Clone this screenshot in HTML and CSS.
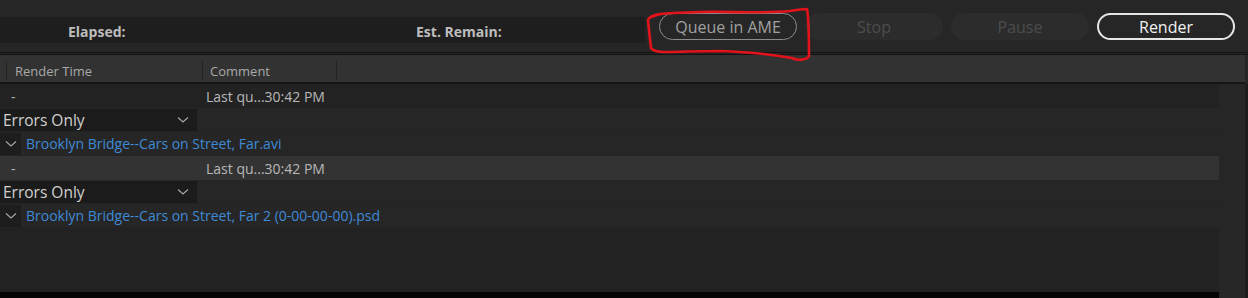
FILE: index.html
```html
<!DOCTYPE html>
<html>
<head>
<meta charset="utf-8">
<link rel="stylesheet" href="styles.css">
</head>
<body>
<div class="panel">
  <div class="top">
    <div class="status">
      <span class="label label-elapsed">Elapsed:</span>
      <span class="label">Est. Remain:</span>
    </div>
    <div class="buttons">
      <button class="btn btn-queue">Queue in AME</button>
      <button class="btn btn-off">Stop</button>
      <button class="btn btn-off">Pause</button>
      <button class="btn btn-render">Render</button>
    </div>
    <svg class="scribble" width="180" height="70" viewBox="0 0 180 70">
      <path d="M12 17 C20 12 40 13 60 12 C90 11 120 14 150 11 C158 10 162 9 167 9 C169 20 169 35 169 56 C167 60 158 61 152 58 C130 54 110 52 80 51 C60 51 40 52 25 52 C18 52 13 51 11 48 C10 40 9 30 8 20 C9 17 12 15 20 14" fill="none" stroke="#e3131b" stroke-width="2.6" stroke-linecap="round" stroke-linejoin="round"/>
    </svg>
  </div>
  <div class="rule"></div>
  <div class="header">
    <div class="hcol hcol-first"></div>
    <div class="hcol hcol-time">Render Time</div>
    <div class="hcol hcol-comment">Comment</div>
  </div>
  <div class="body">
    <div class="list">
      <div class="row row-dark">
        <span class="cell-time">-</span>
        <span class="cell-comment">Last qu...30:42 PM</span>
      </div>
      <div class="row">
        <div class="dropdown">
          <span>Errors Only</span>
          <svg class="chev" width="12" height="8" viewBox="0 0 12 8"><path d="M1 1.5 L6 6 L11 1.5" fill="none" stroke="#a8a8a8" stroke-width="1.1"/></svg>
        </div>
      </div>
      <div class="row">
        <div class="twirl"><svg width="12" height="8" viewBox="0 0 12 8"><path d="M1 1.5 L6 6 L11 1.5" fill="none" stroke="#a8a8a8" stroke-width="1.1"/></svg></div>
        <span class="link">Brooklyn Bridge--Cars on Street, Far.avi</span>
      </div>
      <div class="row row-hi">
        <span class="cell-time">-</span>
        <span class="cell-comment">Last qu...30:42 PM</span>
      </div>
      <div class="row">
        <div class="dropdown">
          <span>Errors Only</span>
          <svg class="chev" width="12" height="8" viewBox="0 0 12 8"><path d="M1 1.5 L6 6 L11 1.5" fill="none" stroke="#a8a8a8" stroke-width="1.1"/></svg>
        </div>
      </div>
      <div class="row">
        <div class="twirl"><svg width="12" height="8" viewBox="0 0 12 8"><path d="M1 1.5 L6 6 L11 1.5" fill="none" stroke="#a8a8a8" stroke-width="1.1"/></svg></div>
        <span class="link">Brooklyn Bridge--Cars on Street, Far 2 (0-00-00-00).psd</span>
      </div>
      <div class="empty"></div>
      <div class="bottom"></div>
    </div>
    <div class="scrollbar"></div>
    <div class="edge"></div>
  </div>
</div>
</body>
</html>
```

FILE: styles.css
```css
html, body {
  margin: 0;
  padding: 0;
  background: #262626;
}
body {
  width: 1248px;
  height: 298px;
  overflow: hidden;
  font-family: "Open Sans", "Noto Sans", sans-serif;
}
.panel {
  display: flex;
  flex-direction: column;
  height: 298px;
}
.top {
  position: relative;
  height: 52px;
  display: flex;
  align-items: flex-start;
  flex-shrink: 0;
}
.status {
  margin-top: 17px;
  width: 645px;
  height: 26px;
  background: #1e1e1e;
  display: flex;
  align-items: center;
  padding-left: 68px;
  padding-top: 2px;
  box-sizing: border-box;
}
.label {
  font-size: 14px;
  font-weight: 700;
  color: #bdbdbd;
}
.label-elapsed {
  width: 348px;
}
.buttons {
  margin-top: 13px;
  margin-left: 14px;
  display: flex;
  gap: 8px;
}
.btn {
  width: 138px;
  height: 27px;
  border-radius: 14px;
  font-family: "Open Sans", "Noto Sans", sans-serif;
  font-size: 16px;
  line-height: 20px;
  padding: 0;
  box-sizing: border-box;
  background: transparent;
}
.btn-queue {
  border: 1.5px solid #8c8c8c;
  color: #a0a0a0;
}
.btn-off {
  border: none;
  background: #2c2c2c;
  color: #4c4c4c;
}
.btn-render {
  border: 2px solid #e6e6e6;
  color: #f2f2f2;
}
.scribble {
  position: absolute;
  left: 640px;
  top: 0;
}
.rule {
  height: 1px;
  border-top: 1px solid #121212;
  border-bottom: 1px solid #121212;
  flex-shrink: 0;
}
.header {
  height: 29px;
  width: 1245px;
  background: #323232;
  border-bottom: 2px solid #161616;
  display: flex;
  align-items: center;
  flex-shrink: 0;
  font-size: 13px;
  color: #a9a9a9;
  padding-top: 4px;
  box-sizing: border-box;
}
.hcol {
  height: 19px;
  display: flex;
  align-items: center;
  border-right: 1px solid #222;
  box-sizing: border-box;
}
.hcol-first {
  width: 7px;
}
.hcol-time {
  width: 196px;
  padding-left: 8px;
}
.hcol-comment {
  width: 134px;
  padding-left: 7px;
}
.body {
  flex: 1;
  display: flex;
  min-height: 0;
}
.list {
  width: 1219px;
  display: flex;
  flex-direction: column;
  background: #222;
}
.row {
  height: 24px;
  display: flex;
  align-items: center;
  background: #262626;
  box-sizing: border-box;
  border-bottom: 1px solid #232323;
  flex-shrink: 0;
}
.row-dark {
  background: #222;
  border-bottom: none;
}
.row-hi {
  background: #333;
  border-bottom: none;
}
.cell-time {
  width: 206px;
  padding-left: 11px;
  box-sizing: border-box;
  font-size: 14px;
  color: #b2b2b2;
}
.cell-comment {
  font-size: 14px;
  color: #b8b8b8;
}
.dropdown {
  width: 197px;
  height: 22px;
  background: #1b1b1b;
  display: flex;
  align-items: center;
  justify-content: space-between;
  padding: 0 8px 0 3px;
  box-sizing: border-box;
  font-size: 15.5px;
  color: #d0d0d0;
}
.twirl {
  width: 21px;
  height: 22px;
  background: #1d1d1d;
  display: flex;
  align-items: center;
  justify-content: center;
  margin-right: 5px;
}
.link {
  font-size: 14px;
  color: #3f8ad6;
}
.empty {
  flex: 1;
}
.bottom {
  height: 6px;
  background: #050505;
}
.scrollbar {
  width: 26px;
  background: #262626;
}
.edge {
  width: 3px;
  background: #1c1c1c;
}
```
